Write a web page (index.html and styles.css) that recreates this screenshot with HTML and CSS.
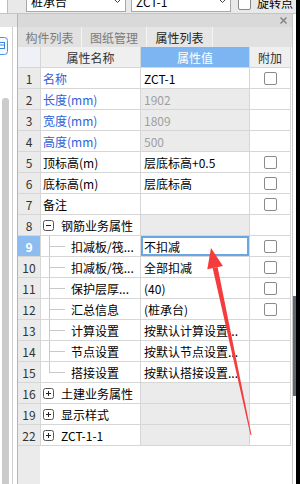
FILE: index.html
```html
<!DOCTYPE html>
<html lang="zh-CN">
<head>
    <meta charset="UTF-8">
    <meta name="viewport" content="width=device-width, initial-scale=1.0">
    <title>属性列表</title>
    <link rel="stylesheet" href="styles.css">
</head>
<body>
    <div class="app">
        <div class="toolbar">
            <div class="tb-edge"></div>
            <div class="combo"><span>桩承台</span><svg width="7" height="4" viewBox="0 0 7 4"><path d="M0.5 0.5l3 3 3-3" fill="none" stroke="#444"/></svg></div>
            <div class="combo combo-2"><span>ZCT-1</span><svg width="7" height="4" viewBox="0 0 7 4"><path d="M0.5 0.5l3 3 3-3" fill="none" stroke="#444"/></svg></div>
            <span class="tb-check"></span>
            <span class="tb-label">旋转点</span>
        </div>

        <div class="main">
            <div class="sidebar">
                <div class="side-head"></div>
                <div class="side-body">
                    <div class="side-list">
                        <svg class="side-icon" width="9" height="18" viewBox="0 0 9 18"><rect x="-9.5" y="0.5" width="17" height="17" rx="3" fill="#f3f8fe" stroke="#4b95e6"/><rect x="-2.5" y="5.5" width="7" height="6" fill="#fff" stroke="#3a86de"/><path d="M-2 8h6" stroke="#3a86de"/></svg>
                        <div class="thumb"></div>
                    </div>
                </div>
            </div>

            <div class="panel">
                <div class="panel-head">
                    <svg width="7" height="7" viewBox="0 0 7 7"><path d="M0.5 0.5l6 6M6.5 0.5l-6 6" stroke="#808080" stroke-width="1.4"/></svg>
                </div>
                <div class="tabs">
                    <div class="tab tab-1">构件列表</div>
                    <div class="tab tab-2">图纸管理</div>
                    <div class="tab tab-3 active">属性列表</div>
                </div>

                <div class="grid-wrap">
                    <div class="grid">
                        <div class="hd hd-num"></div>
                        <div class="hd">属性名称</div>
                        <div class="hd hd-val">属性值</div>
                        <div class="hd">附加</div>

                        <div class="num">1</div>
                        <div class="name link">名称</div>
                        <div class="val">ZCT-1</div>
                        <div class="ext"><span class="cb"></span></div>

                        <div class="num">2</div>
                        <div class="name link">长度(mm)</div>
                        <div class="val ro">1902</div>
                        <div class="ext"></div>

                        <div class="num">3</div>
                        <div class="name link">宽度(mm)</div>
                        <div class="val ro">1809</div>
                        <div class="ext"></div>

                        <div class="num">4</div>
                        <div class="name link">高度(mm)</div>
                        <div class="val ro">500</div>
                        <div class="ext"></div>

                        <div class="num">5</div>
                        <div class="name">顶标高(m)</div>
                        <div class="val">层底标高+0.5</div>
                        <div class="ext"><span class="cb"></span></div>

                        <div class="num">6</div>
                        <div class="name">底标高(m)</div>
                        <div class="val">层底标高</div>
                        <div class="ext"><span class="cb"></span></div>

                        <div class="num">7</div>
                        <div class="name">备注</div>
                        <div class="val"></div>
                        <div class="ext"><span class="cb"></span></div>

                        <div class="num">8</div>
                        <div class="name group"><svg width="11" height="11" viewBox="0 0 11 11"><rect x="0.5" y="0.5" width="10" height="10" rx="2" fill="#fff" stroke="#555"/><path d="M3 5.5h5" stroke="#222"/></svg>钢筋业务属性</div>
                        <div class="val ro"></div>
                        <div class="ext"></div>

                        <div class="num cur-num">9</div>
                        <div class="name branch">扣减板/筏...</div>
                        <div class="val cur">不扣减</div>
                        <div class="ext"><span class="cb"></span></div>

                        <div class="num">10</div>
                        <div class="name branch">扣减板/筏...</div>
                        <div class="val">全部扣减</div>
                        <div class="ext"><span class="cb"></span></div>

                        <div class="num">11</div>
                        <div class="name branch">保护层厚...</div>
                        <div class="val">(40)</div>
                        <div class="ext"><span class="cb"></span></div>

                        <div class="num">12</div>
                        <div class="name branch">汇总信息</div>
                        <div class="val">(桩承台)</div>
                        <div class="ext"><span class="cb"></span></div>

                        <div class="num">13</div>
                        <div class="name branch">计算设置</div>
                        <div class="val">按默认计算设置...</div>
                        <div class="ext"></div>

                        <div class="num">14</div>
                        <div class="name branch">节点设置</div>
                        <div class="val">按默认节点设置...</div>
                        <div class="ext"></div>

                        <div class="num">15</div>
                        <div class="name branch last">搭接设置</div>
                        <div class="val">按默认搭接设置...</div>
                        <div class="ext"></div>

                        <div class="num">16</div>
                        <div class="name group"><svg width="11" height="11" viewBox="0 0 11 11"><rect x="0.5" y="0.5" width="10" height="10" rx="2" fill="#fff" stroke="#555"/><path d="M3 5.5h5M5.5 3v5" stroke="#222"/></svg>土建业务属性</div>
                        <div class="val ro"></div>
                        <div class="ext"></div>

                        <div class="num">19</div>
                        <div class="name group"><svg width="11" height="11" viewBox="0 0 11 11"><rect x="0.5" y="0.5" width="10" height="10" rx="2" fill="#fff" stroke="#555"/><path d="M3 5.5h5M5.5 3v5" stroke="#222"/></svg>显示样式</div>
                        <div class="val ro"></div>
                        <div class="ext"></div>

                        <div class="num">22</div>
                        <div class="name group"><svg width="11" height="11" viewBox="0 0 11 11"><rect x="0.5" y="0.5" width="10" height="10" rx="2" fill="#fff" stroke="#555"/><path d="M3 5.5h5M5.5 3v5" stroke="#222"/></svg>ZCT-1-1</div>
                        <div class="val ro"></div>
                        <div class="ext"></div>
                    </div>
                </div>
            </div>

            <div class="splitter"><div class="handle"></div></div>
        </div>
    </div>
    <div class="edge"></div>

    <!-- red annotation arrow drawn over the grid -->
    <svg class="arrow" width="300" height="484" viewBox="0 0 300 484">
        <polygon points="211,248 222.9,266 207.3,269.2" fill="#f53b3b"/>
        <polygon points="217.6,267.1 212.7,268.2 250.5,435.1 251.5,434.9" fill="#f53b3b"/>
    </svg>
</body>
</html>
```

FILE: styles.css
```css
body { margin: 0; width: 300px; height: 484px; overflow: hidden; display: flex; position: relative; background: #fff; color: #000; font-family: "Noto Sans CJK SC", "Microsoft YaHei", sans-serif; font-size: 12px; }
.app { width: 296px; display: flex; flex-direction: column; }
.edge { width: 4px; background: #000; }

/* top toolbar, cut off by the window */
.toolbar { height: 14px; box-sizing: border-box; border-bottom: 1px solid #c4c4c4; background: #e9e9e9; display: flex; align-items: flex-end; overflow: hidden; }
.tb-edge { width: 7px; height: 20px; background: #fff; border-right: 1px solid #bcbcbc; margin-right: 18px; flex-shrink: 0; }
.combo { width: 100px; height: 24px; flex-shrink: 0; box-sizing: border-box; border: 1px solid #a8a8a8; background: #fff; display: flex; align-items: center; justify-content: space-between; padding: 2px 4px 0 4px; margin-bottom: 1px; }
.combo-2 { margin-left: 5px; }
.tb-check { width: 13px; height: 13px; flex-shrink: 0; box-sizing: border-box; border: 1px solid #888; border-radius: 2px; background: #fff; margin: 0 0 3px 7px; }
.tb-label { margin: 0 0 4px 6px; line-height: 12px; white-space: nowrap; }

.main { flex: 1; display: flex; min-height: 0; }

/* left strip */
.sidebar { width: 17px; display: flex; flex-direction: column; }
.side-head { height: 13px; background: #e4e4e4; }
.side-body { flex: 1; display: flex; background: #fff; }
.side-list { width: 12px; border-right: 1px solid #cfcfcf; display: flex; flex-direction: column; }
.side-icon { margin-top: 10px; }
.thumb { margin: 43px 0 0 2px; width: 7px; flex: 1; background: #cbcbcb; border-radius: 3px 3px 0 0; }

/* property panel */
.panel { width: 276px; box-sizing: border-box; border-left: 1px solid #b5b5b5; border-right: 1px solid #c6c6c6; display: flex; flex-direction: column; }
.panel-head { height: 13px; background: #d9d9d9; display: flex; justify-content: flex-end; align-items: center; padding-right: 5px; }
.tabs { height: 20px; display: flex; background: #e1e1e1; }
.tab { box-sizing: border-box; border-right: 1px solid #f4f4f4; display: flex; align-items: center; justify-content: center; color: #7a7a7a; }
.tab-1 { width: 64px; }
.tab-2 { width: 65px; }
.tab-3 { width: 66px; }
.tab.active { color: #222; background: #e6e6e6; }

.grid-wrap { flex: 1; background: linear-gradient(to right, #ebebeb 22px, #fff 22px); }
.grid { display: grid; grid-template-columns: 23px 100px 109px 41px; grid-auto-rows: 21px; }
.grid > div { box-sizing: border-box; border-right: 1px solid #d6d6d6; border-bottom: 1px solid #d6d6d6; display: flex; align-items: center; white-space: nowrap; overflow: hidden; background-color: #fff; }
.grid > .num { justify-content: center; background-color: #ebebeb; color: #333; }
.grid > .hd { justify-content: center; background-color: #efefef; color: #333; }
.grid > .hd-num { background-color: #eef1f6; }
.grid > .hd-val { background-color: #7db5f2; color: #fff; }
.name { padding-left: 2px; }
.val { padding-left: 3px; }
.ext { justify-content: center; }
.link { color: #2e62d6; }
.grid > .ro { background-color: #ebebeb; color: #a0a0a0; }
.grid > .cur-num { background-color: #8dbdf0; color: #fff; font-weight: bold; }
.cur { box-shadow: inset 0 0 0 2px #6ba6e4; }
.group { gap: 7px; }
.branch { padding-left: 30px; background-image: linear-gradient(#c9c9c9, #c9c9c9), linear-gradient(#c9c9c9, #c9c9c9); background-repeat: no-repeat; background-size: 1px 100%, 16px 1px; background-position: 8px 0, 8px 10px; }
.branch.last { background-size: 1px 11px, 16px 1px; }
.cb { width: 13px; height: 13px; box-sizing: border-box; border: 1px solid #8a8a8a; border-radius: 2px; background: #fff; }

.splitter { width: 3px; background: #fff; display: flex; flex-direction: column; }
.handle { margin-top: 282px; height: 100px; background: #5e6a76; }

.arrow { position: absolute; left: 0; top: 0; pointer-events: none; }
```
